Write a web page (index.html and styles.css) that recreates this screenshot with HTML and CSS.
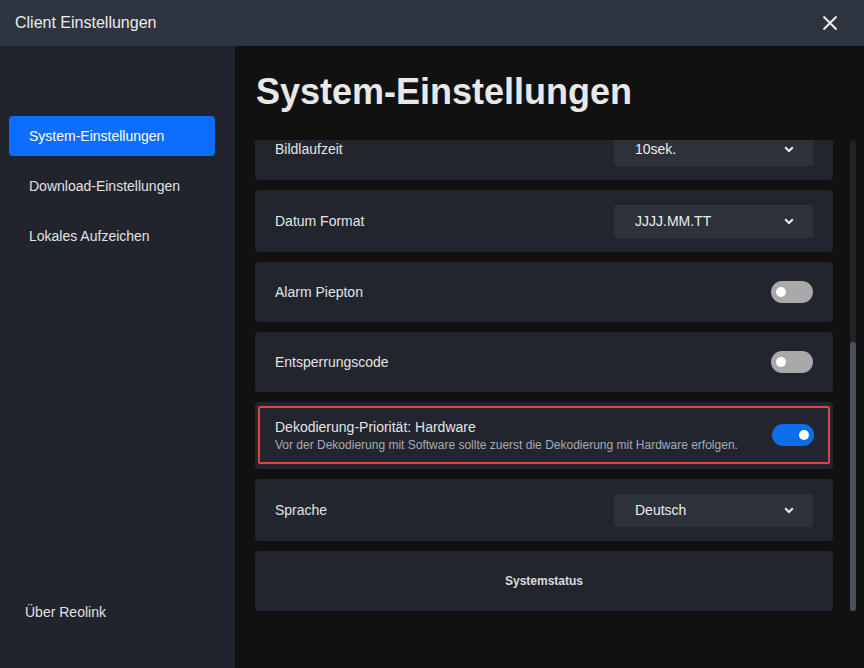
FILE: index.html
```html
<!DOCTYPE html>
<html lang="de">
<head>
<meta charset="UTF-8">
<meta name="viewport" content="width=device-width, initial-scale=1.0">
<title>Client Einstellungen</title>
<link rel="stylesheet" href="styles.css">
</head>
<body>

<div class="window">
    <header class="titlebar">
        <span class="titlebar-text">Client Einstellungen</span>
        <button class="close-btn" aria-label="Schließen">
            <svg width="16" height="16" viewBox="0 0 16 16"><path d="M1.5 1.5 L14.5 14.5 M14.5 1.5 L1.5 14.5" stroke="#ececec" stroke-width="2" fill="none"/></svg>
        </button>
    </header>

    <div class="body">
        <nav class="sidebar">
            <ul class="nav-list">
                <li class="nav-item active">System-Einstellungen</li>
                <li class="nav-item">Download-Einstellungen</li>
                <li class="nav-item">Lokales Aufzeichen</li>
            </ul>
            <div class="nav-item about">Über Reolink</div>
        </nav>

        <main class="content">
            <h1 class="page-title">System-Einstellungen</h1>

            <div class="scroll-area">
                <div class="settings" id="settings">
                    <div class="card select-card">
                        <span class="label">Bildlaufzeit</span>
                        <div class="select"><span>10sek.</span><svg class="chev" width="10" height="7" viewBox="0 0 10 7"><path d="M1.2 1.3 L5 5 L8.8 1.3" stroke="#f0f0f0" stroke-width="2" fill="none"/></svg></div>
                    </div>
                    <div class="card select-card">
                        <span class="label">Datum Format</span>
                        <div class="select"><span>JJJJ.MM.TT</span><svg class="chev" width="10" height="7" viewBox="0 0 10 7"><path d="M1.2 1.3 L5 5 L8.8 1.3" stroke="#f0f0f0" stroke-width="2" fill="none"/></svg></div>
                    </div>
                    <div class="card">
                        <span class="label">Alarm Piepton</span>
                        <span class="toggle"></span>
                    </div>
                    <div class="card">
                        <span class="label">Entsperrungscode</span>
                        <span class="toggle"></span>
                    </div>
                    <div class="card highlight">
                        <div class="highlight-box">
                            <div class="label-group">
                                <span class="label">Dekodierung-Priorität: Hardware</span>
                                <span class="desc">Vor der Dekodierung mit Software sollte zuerst die Dekodierung mit Hardware erfolgen.</span>
                            </div>
                            <span class="toggle on"></span>
                        </div>
                    </div>
                    <div class="card select-card">
                        <span class="label">Sprache</span>
                        <div class="select"><span>Deutsch</span><svg class="chev" width="10" height="7" viewBox="0 0 10 7"><path d="M1.2 1.3 L5 5 L8.8 1.3" stroke="#f0f0f0" stroke-width="2" fill="none"/></svg></div>
                    </div>
                    <div class="card center-card">
                        <span class="status-text">Systemstatus</span>
                    </div>
                </div>
                <div class="scrollbar"><div class="thumb"></div></div>
            </div>
        </main>
    </div>
</div>

<script>
// Liste ans Ende scrollen
var list = document.getElementById("settings");
list.scrollTop = list.scrollHeight;
</script>

</body>
</html>
```

FILE: styles.css
```css
* {
    box-sizing: border-box;
}
body {
    margin: 0;
    padding: 0;
    font-family: "Liberation Sans", Arial, sans-serif;
    background-color: #111111;
    color: #e6e6e6;
}
.window {
    width: 864px;
    height: 668px;
    display: flex;
    flex-direction: column;
    overflow: hidden;
}
.titlebar {
    height: 46px;
    flex-shrink: 0;
    background-color: #2e343f;
    display: flex;
    align-items: center;
    justify-content: space-between;
    padding: 0 26px 0 15px;
}
.titlebar-text {
    font-size: 16px;
    color: #ececec;
}
.close-btn {
    background: none;
    border: none;
    padding: 0;
    width: 16px;
    height: 16px;
    display: flex;
    cursor: pointer;
}
.body {
    flex: 1;
    display: flex;
    min-height: 0;
}
.sidebar {
    width: 235px;
    flex-shrink: 0;
    background-color: #21242c;
    display: flex;
    flex-direction: column;
    justify-content: space-between;
    padding: 70px 20px 36px 9px;
}
.nav-list {
    list-style: none;
    margin: 0;
    padding: 0;
    display: flex;
    flex-direction: column;
    gap: 10px;
}
.nav-item {
    height: 40px;
    display: flex;
    align-items: center;
    padding-left: 20px;
    font-size: 14px;
    color: #e2e2e2;
    border-radius: 4px;
}
.nav-item.active {
    background-color: #0d6efd;
    color: #ffffff;
}
.nav-item.about {
    padding-left: 16px;
}
.content {
    flex: 1;
    display: flex;
    flex-direction: column;
    padding: 0 8px 57px 20px;
    min-width: 0;
}
.page-title {
    margin: 25px 0 27px 1px;
    font-size: 36px;
    line-height: 42px;
    font-weight: bold;
    color: #e8e8e8;
}
.scroll-area {
    flex: 1;
    min-height: 0;
    display: flex;
    gap: 17px;
}
.settings {
    width: 578px;
    flex-shrink: 0;
    overflow: hidden;
    display: flex;
    flex-direction: column;
    gap: 10px;
}
.scrollbar {
    width: 6px;
    background-color: #222222;
    border-radius: 3px;
    display: flex;
    flex-direction: column;
    justify-content: flex-end;
}
.thumb {
    height: 269px;
    background-color: #4b525d;
    border-radius: 3px;
}
.card {
    flex-shrink: 0;
    height: 60px;
    background-color: #22252d;
    border-radius: 4px;
    display: flex;
    align-items: center;
    justify-content: space-between;
    padding: 0 20px;
}
.card.select-card {
    height: 62px;
}
.label {
    font-size: 14px;
    color: #e4e4e4;
}
.select {
    width: 199px;
    height: 33px;
    background-color: #2c313a;
    border-radius: 3px;
    display: flex;
    align-items: center;
    justify-content: space-between;
    padding: 0 19px 0 21px;
    font-size: 14px;
    color: #ececec;
}
.chev {
    display: block;
}
.toggle {
    width: 42px;
    height: 22px;
    border-radius: 11px;
    background-color: #a9a9a9;
    position: relative;
}
.toggle::after {
    content: "";
    position: absolute;
    top: 6px;
    left: 5px;
    width: 10px;
    height: 10px;
    border-radius: 50%;
    background-color: #ffffff;
}
.toggle.on {
    background-color: #0b6ee8;
}
.toggle.on::after {
    left: auto;
    right: 5px;
}
.card.highlight {
    height: 67px;
    padding: 4px 3px 5px;
}
.highlight-box {
    width: 100%;
    height: 100%;
    border: 2px solid #e0443e;
    border-radius: 2px;
    display: flex;
    align-items: center;
    justify-content: space-between;
    padding: 0 14px 0 15px;
}
.label-group {
    display: flex;
    flex-direction: column;
    gap: 3px;
}
.desc {
    font-size: 12px;
    color: #a8abb0;
}
.center-card {
    justify-content: center;
}
.status-text {
    font-size: 12px;
    font-weight: bold;
    color: #dcdcdc;
}
```
